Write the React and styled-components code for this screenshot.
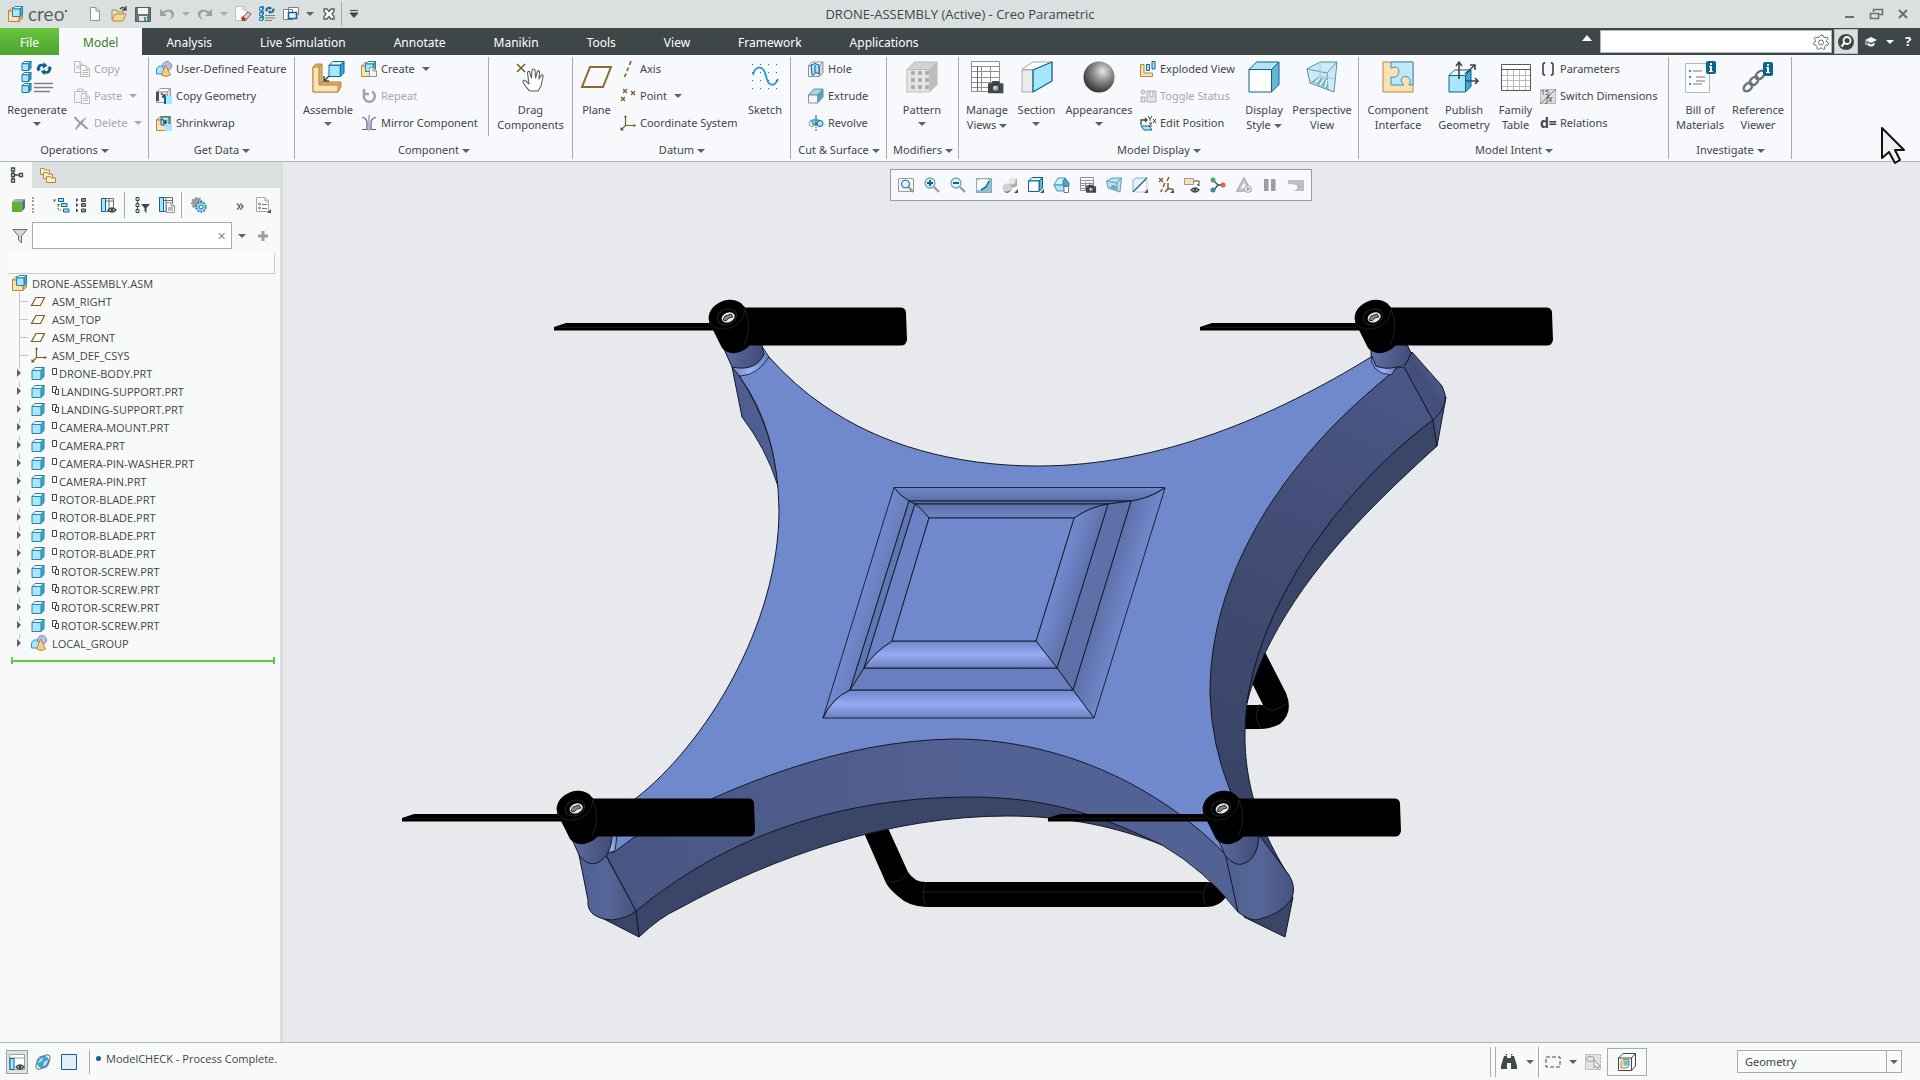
import React, { useState } from 'react';
import styled, { createGlobalStyle } from 'styled-components';

const BLUE = '#0f6390';
const SKY = '#a6e7fd';
const TAN = '#fbe2b0';
const GOLD = '#b38840';
const BROWN = '#7d5f22';
const INK = '#3e4648';
const GREY = '#a9acad';

/* ---------- icons ---------- */

const Cube = ({ x = 0, y = 0, s = 10, front = SKY, top = '#e8f9ff', side = '#3ba6d8', line = BLUE }) => {
  const d = s * 0.25;
  return (
    <g transform={`translate(${x} ${y})`} stroke={line} strokeLinejoin="round">
      <path fill={top} d={`M0 ${d}L${d} 0H${s}L${s - d} ${d}Z`} />
      <path fill={side} d={`M${s - d} ${d}L${s} 0V${s - d}L${s - d} ${s}Z`} />
      <path fill={front} d={`M0 ${d}H${s - d}V${s}H0Z`} />
    </g>
  );
};

const Camera = ({ x, y, s = 1 }) => (
  <g transform={`translate(${x} ${y}) scale(${s})`}>
    <path d="M0 3h3l1-2h6l1 2h3v9H0z" fill="#444a4c" />
    <circle cx="7" cy="7.500" r="3.500" fill="#8b9091" stroke="#1d2122" />
    <circle cx="6.500" cy="7" r="1.200" fill="#eee" />
  </g>
);

const Eye = ({ x, y }) => (
  <g transform={`translate(${x} ${y})`}>
    <path d="M0 3Q4-1 8 3Q4 7 0 3Z" fill="#fff" stroke={INK} strokeWidth="1.300" />
    <circle cx="4" cy="3" r="1.500" fill={INK} />
  </g>
);

const Page = ({ x = 3, y = 1, w = 10, h = 14, line = '#8d9294' }) => (
  <g transform={`translate(${x} ${y})`}>
    <path d={`M.5.5H${w - 4}L${w - 0.5} 4V${h - 0.5}H.5Z`} fill="#fbfcfd" stroke={line} />
    <path d={`M${w - 4} .5V4H${w - 0.5}`} fill="#d5dde0" stroke={line} />
  </g>
);

const Spin = ({ x, y, s = 1 }) => (
  <g transform={`translate(${x} ${y}) scale(${s})`} fill={BLUE}>
    <path d="M1 7C1 3 4 1 8 2L8 0L12 4L7 7L7.500 5C5.500 4.500 4 5 4 7L5.500 7L2.500 10L0 7Z" />
    <path d="M16 7C16 11 13 13 9 12L9 14L5 10L10 7.500L9.500 9.500C11.500 10 13 9 13 7L11.500 7L14.500 4L17 7Z" />
  </g>
);

const Axes = () => (
  <path d="M5.500 1V10.500H15M5.500 10.500L1 15M4.500 2.500L5.500 1L6.500 2.500M13.500 9.500L15 10.500L13.500 11.500M1 12.500V15H3.500" fill="none" stroke={BROWN} strokeWidth="1.200" />
);

const Table = ({ w = 28, h = 28, c = 4, r = 6, line = '#8c9193' }) => (
  <g stroke={line} fill="none">
    <path fill="#fff" d={`M.5.5H${w - 0.5}V${h - 0.5}H.5Z`} />
    {Array.from({ length: r - 1 }, (_, i) => <path key={i} d={`M1 ${Math.round((i + 1) * h / r) + 0.5}H${w - 1}`} />)}
    {Array.from({ length: c - 1 }, (_, i) => <path key={i} d={`M${Math.round((i + 1) * w / c) + 0.5} 5V${h - 1}`} />)}
  </g>
);

const Cross = ({ x, y, s = 4, w = 1.3, c = BROWN }) => (
  <path d={`M${x} ${y}l${s} ${s}m0 ${-s}l${-s} ${s}`} stroke={c} strokeWidth={w} fill="none" />
);

const Corner = () => <path d="M16 12V16H12Z" fill="#4a4f51" />;

const gearPath = 'M8 1L9.800 1L10.300 3L12 3.800L13.900 2.900L15 4.500L13.600 6.200L13.800 8L15.500 9.200L15 11L12.900 11.200L11.700 12.600L12 14.700L10.300 15.500L8.800 14L7 14L5.500 15.500L3.800 14.600L4.200 12.600L3 11.200L1 10.900L.5 9L2.200 8L2.400 6.100L1.200 4.400L2.400 3L4.300 3.800L6 3Z';

const Person = () => (
  <g>
    <path d="M.5 8L3 5H9V13H.5Z" fill={SKY} stroke="#3a94bd" />
    <circle cx="11" cy="5" r="4.500" fill="#b6c0ea" stroke="#7886c4" />
    <path d="M9.500 4L14.500 14Q10 17 5.500 14Z" fill="#f3cf85" stroke={GOLD} />
  </g>
);

const Block = () => (
  <g>
    <Cube x={0.5} y={1.5} s={14} front={TAN} top="#fff3d5" side="#dfb564" line={GOLD} />
    <Cube x={4.5} y={0.5} s={10} line="#2b83aa" />
  </g>
);

const art = {
  logo: <Block />,
  fresh: <Page />,
  open: <g><path d="M1 4V14L4 8H15L12 15H1M1 4H6L7 6H12V8" fill="#f6d796" stroke={GOLD} /><path d="M9 3Q12 0 14 3M15 0V4H11" fill="none" stroke={INK} strokeWidth="1.400" /></g>,
  save: <g><path d="M.5 1.500H15.500V15.500H.5Z" fill="#6e7476" stroke="#54595b" /><path d="M3 2H13V8H3Z" fill="#f4f6f7" /><path d="M4 10H12V15H4Z" fill="#dfe9ec" /><path d="M9 11H11V15H9Z" fill="#3d8fb5" /></g>,
  undo: <path d="M1 3V10H8L5.500 7.500Q9 4 12 7Q14 10 10 14Q16 11 15 7Q12 1 4 5.500Z" fill="#9a9fa1" />,
  redo: <path d="M15 3V10H8L10.500 7.500Q7 4 4 7Q2 10 6 14Q0 11 1 7Q4 1 12 5.500Z" fill="#9a9fa1" />,
  erase: <g><Page x={0} y={0} w={12} h={15} line="#bcc1c3" /><path d="M7 12L13 6L16 8L10 15Z" fill="#e8c9bf" stroke="#8c5145" /><path d="M6 12L8 10L11 13L9 15H7Z" fill="#b03d33" /></g>,
  regen: <g>{[1, 6, 11].map(y => <Cube key={y} x={0.5} y={y - 0.5} s={4} line="#2b83aa" />)}<Spin x={6} y={0} s={0.58} /><path d="M6 9.500H16M6 12H16M6 14.500H13" stroke="#7c8284" /></g>,
  windows: <g fill="#fff" stroke="#7b8183"><path d="M5.500 1.500H15.500V8.500H5.500ZM.5 3.500H9.500V13.500H.5Z" /><path d="M5.500 6.500H13.500V12.500H5.500Z" fill="#e6f6fc" stroke={BLUE} strokeWidth="1.600" /></g>,
  shut: <path d="M3 3H6L8 5.500L10 3H13V5.500L11 8L13 10.500V13H10L8 10.500L6 13H3V10.500L5 8L3 5.500Z" fill="#fff" stroke="#555b5d" strokeWidth="1.300" />,
  customize: <path d="M4 4.500H12M4 7H12L8 11.500Z" fill={INK} stroke={INK} strokeWidth="1" />,
  bigRegen: <g>{[0, 11, 22].map(y => <Cube key={y} x={1} y={y + 0.5} s={9} line="#1d769f" />)}<Spin x={15} y={1} s={0.95} /><path d="M13 22.500H32M13 26.500H32M13 30.500H29" stroke="#7c8284" strokeWidth="1.500" /></g>,
  copy: <g opacity=".6"><Page x={0} y={0} w={10} h={12} /><Page x={6} y={4} w={10} h={12} /><path d="M2 5H6M2 7H6M8 9.500H14M8 11.500H14M8 13.500H14" stroke="#8d9294" /></g>,
  paste: <g opacity=".6"><path d="M.5 3.500H12.500V14.500H.5ZM4 3V1H9V3" fill="#f1f1f1" stroke="#8d9294" /><Page x={7} y={5} w={9} h={11} /><path d="M9 10.500H14M9 12.500H14" stroke="#8d9294" /></g>,
  remove: <path d="M1 1L6 6.500L13 1.500L8.500 8L15 14L12 14L7 9.500L2 15L1 14L5 8L0 3Z" fill="#9a9fa1" />,
  udf: <Person />,
  copyGeom: <g><Cube x={0.5} y={0.5} s={14} front="#f2f2f2" top="#fff" side="#d8dadb" line="#979c9e" /><path d="M0 4H3V13H0Z" fill="#4b5052" /><path d="M5 5L9 9M9 6V9H6" stroke={INK} strokeWidth="1.300" /><path d="M8 8H10V16H8Z" fill={BLUE} /><path d="M10 8H16V16H10Z" fill={SKY} /></g>,
  shrink: <g><Cube x={0.5} y={1.500} s={14} front={TAN} top="#fff3d5" side="#dfb564" line={GOLD} /><path d="M5 2H13V10H5Z" fill={SKY} stroke={BLUE} /><path d="M6 4L10 8M10 5V8H7" stroke={INK} strokeWidth="1.300" /><path d="M9 9H16V16H9Z" fill={SKY} /></g>,
  assemble: <g strokeLinejoin="round"><path d="M1 6L4 3H10V21H29V26L26 31H1Z" fill="#d9b164" stroke={GOLD} /><path d="M1 6H7V24H26V31H1Z" fill={TAN} stroke={GOLD} /><path d="M7 6L10 3M7 24L10 21M26 24L29 21" stroke={GOLD} /><Cube x={17} y={0.500} s={15} /><path d="M17 15L13 19M12 15V20H17" stroke={INK} strokeWidth="1.500" fill="none" /></g>,
  create: <g><Block /><Page x={8} y={6} w={8} h={10} /></g>,
  repeat: <path d="M3.500 5.500A5.500 5.500 0 1 0 11 3.500M3 1V6H8" fill="none" stroke="#a0a4a6" strokeWidth="2.500" />,
  mirror: <g fill="none" stroke="#7a4a9c" strokeWidth="1.200"><path d="M1 2.500H2Q6 4 6 8V14.500H1" /><path d="M15 2.500H14Q10 4 10 8V14.500H15" /><path d="M8 0V16" stroke="#8d9294" /></g>,
  drag: <g><Cross x={2} y={3} s={8} w={1.600} /><path d="M8 21Q8 18 11 20L14 23L12.500 12Q12.500 10 14.500 10.500L16.500 17L17 9Q18.500 7 20 9L20.500 17L22.500 10Q24 9 24.500 11L24 18L26.500 14Q28.500 13.500 28 16L26 25L23 30H15Q11 27 8 21Z" fill="#fff" stroke="#5a5f61" strokeWidth="1.100" strokeLinejoin="round" /></g>,
  plane: <path d="M9 6H30L22 26H1Z" fill="none" stroke="#8c6c2c" strokeWidth="2" />,
  axis: <path d="M11 0L9.500 4M8.500 6.500L7 10M6 12.500L4.500 16" stroke={BROWN} strokeWidth="1.600" />,
  point: <g><Cross x={3} y={1} /><Cross x={11} y={3} /><Cross x={1} y={9} /></g>,
  csys: <Axes />,
  sketch: <g><path d="M4 14C6 5 14 3 17 15C19 25 25 27 29 18" fill="none" stroke="#2fa3d8" strokeWidth="2" /><g fill="#555">{[3, 11, 19, 27].map(x => [3, 11, 19, 27].map(y => <path key={`${x}-${y}`} d={`M${x} ${y}h1v1h-1z`} />))}</g></g>,
  hole: <g><Cube x={0.500} y={1} s={14.500} front="#eef1f2" top="#fff" side="#d5d8d9" line="#8d9294" /><path d="M3 4Q7 1 11 4V13Q7 10 6 14H4Z" fill={SKY} stroke={BLUE} /><path d="M7 4V12" stroke={BLUE} /></g>,
  extrude: <g><path d="M.5 7L6 1H15L10 7Z" fill="#a9d8e9" stroke="#5b93a9" /><path d="M9.500 7L15 1V9L9.500 15Z" fill="#4aa5c8" stroke="#5b93a9" /><path d="M.5 7H9.500V15H.5Z" fill="#f3f4f4" stroke="#8d9294" /></g>,
  revolve: <g><circle cx="4" cy="8.500" r="3" fill="#fff" stroke="#8d9294" /><path d="M3 5.500Q8 3 12 5.500L9 10Q7 9 5 10Z" fill="#6dc5e8" stroke="#4f9abb" /><circle cx="12" cy="8.500" r="3" fill={SKY} stroke={BLUE} /><path d="M8 0V16" stroke={INK} strokeDasharray="4 1 1 1" /></g>,
  pattern: <g><Cube x={1} y={1} s={30} front="#e6e6e6" top="#d3d3d3" side="#bdbdbd" line="#bbb" /><g fill="#a7a7a7" stroke="#d2d2d2" strokeWidth=".5">{[5, 12, 19].map(x => [10, 17, 24].map(y => <path key={`${x}-${y}`} d={`M${x} ${y}h4v4h-4z`} />))}</g></g>,
  manage: <g><Table w={29} h={31} r={6} c={3} /><path d="M6.500 5V30" stroke="#666" /><Camera x={17} y={19} s={1.100} /></g>,
  section: <g strokeLinejoin="round"><path d="M1 8L12 1H31L12 9Z" fill="#fff" stroke="#aaa" /><path d="M1 9H12V31H1Z" fill="#ececec" stroke="#aaa" /><path d="M12 9L31 1V20L12 31Z" fill={SKY} stroke={BLUE} strokeWidth="1.300" /></g>,
  ball: <circle cx="16" cy="16" r="15.500" fill="url(#ballShade)" />,
  exploded: <g><path d="M.5 3.500H4V12H12.500V15.500H.5Z" fill={TAN} stroke={GOLD} /><path d="M6.500 3.500H9.500V9.500H6.500ZM12 .5H15V8H12Z" fill={SKY} stroke={BLUE} /></g>,
  toggle: <g fill="#e4e4e4" stroke="#a9acad"><circle cx="3" cy="4" r="2" /><path d="M1 9H5V14H1ZM7 3H16V14H7ZM10 3V9H13V3" /></g>,
  position: <g><path d="M1 10V5H7M5 3L7 5L5 7M1 5V9" fill="none" stroke={INK} strokeWidth="1.300" /><path d="M8 1L10 4L12 1M10 4V6M13 4L16 8M16 4L13 8M9 8H12L9 11H12" fill="none" stroke={INK} /><path d="M1 11H9L12 15H4Z" fill={SKY} stroke={BLUE} /></g>,
  display: <Cube x={1} y={1} s={30} front="#fff" top="#b3e3f5" side="#68b4d3" />,
  perspective: <g strokeLinejoin="round"><path d="M1 8L14 1H31L28 31L4 22Z" fill="#cfe9f4" stroke="#4e93ae" /><path d="M1 8L21 12L31 1M21 12L22 29" fill="none" stroke="#5d9fba" /><path d="M14 1V15L5 22M14 15L28 18" fill="none" stroke="#9cc9db" /><path d="M5 21L12 16L21 18L22 28Z" fill="#7cb5cc" /><path d="M9 22L14 17M14 24L18 18M19 26L21 19" stroke="#fff" strokeWidth="1.500" /></g>,
  puzzle: <g><path d="M1 1H31V31H1Z" fill={TAN} stroke={GOLD} /><path d="M9 1H31V24H27Q30 19 26 16Q20 14 19 19Q20 23 22 24H9V16Q16 18 17 10Q16 4 9 7Z" fill="#bfe9f7" stroke="#3a94bd" /></g>,
  publish: <g><Cube x={1} y={9} s={22} /><g stroke={INK} strokeWidth="1.600" fill="none"><path d="M11 18V1M8 5L11 1L14 5M17 13L27 4M22 4H27V9M17 20H30M27 17L30 20L27 23" /></g></g>,
  family: <g transform="translate(1 3)"><Table w={30} h={27} r={5} c={5} line="#bbb" /><path d="M.5.5H29.500V26.500H.5ZM1 5.500H29" fill="none" stroke="#55595b" /></g>,
  params: <path d="M5 1.500L3 3V13L5 14.500M11 1.500L13 3V13L11 14.500" fill="none" stroke={INK} strokeWidth="1.600" />,
  switchDim: <g><path d="M.5 1.500H15.500V15.500H.5Z" fill="#dcdedf" stroke="#b4b7b8" /><path d="M0 16L16 1" stroke="#777" /><text x="1" y="7" fontSize="7" fontFamily="Noto Sans" fill={INK}>15</text><text x="6" y="14" fontSize="8" fontStyle="italic" fontFamily="Noto Sans" fill={INK}>fx</text></g>,
  relations: <text x="0" y="13" fontSize="14" fontWeight="700" fontFamily="Noto Sans" fill={INK}>d=</text>,
  bom: <g><Page x={1} y={2} w={25} h={30} line="#b4b8ba" /><path d="M5 9h2v2H5zM5 15h2v2H5zM5 22h2v2H5z" fill="#239bd0" /><path d="M9 10H18M12 16H21M12 20H21M9 23H18" stroke="#777" /><rect x="22" y="0" width="10" height="13" rx="2" fill={BLUE} /><path d="M26 2h2v2h-2zM25 5h3v5h1v1h-4v-1h1V6h-1z" fill="#fff" /></g>,
  refs: <g><g fill="none" stroke="#6c7173" strokeWidth="2.400"><ellipse cx="6" cy="26" rx="5" ry="3.300" transform="rotate(-45 6 26)" /><ellipse cx="12" cy="20" rx="5" ry="3.300" transform="rotate(-45 12 20)" /><ellipse cx="18" cy="14" rx="5" ry="3.300" transform="rotate(-45 18 14)" /></g><rect x="21" y="1" width="10" height="14" rx="2" fill={BLUE} /><path d="M25 3h2v2h-2zM24 6h3v5h1v1h-4v-1h1V7h-1z" fill="#fff" /></g>,
  gear: <g fill="none" stroke="#666b6d"><path d={gearPath} /><circle cx="8" cy="8.500" r="2.500" /></g>,
  find: <g><circle cx="8" cy="8" r="8" fill={INK} /><circle cx="9" cy="6.500" r="3.500" fill="none" stroke="#fff" strokeWidth="1.800" /><path d="M6.500 9L3.500 12.500" stroke="#fff" strokeWidth="2" /></g>,
  cap: <g fill="#f3f5f5"><path d="M2 6L8 3L14 6L8 9ZM4.500 8.500L8 10.500L11.500 8.500V11Q8 14 4.500 11ZM2.500 7V11H3.500V7Z" /></g>,
  min: <path d="M4 11H13" stroke="#6a7072" strokeWidth="2" />,
  restore: <path d="M5.500 6V3.500H14.500V8.500H11M2.500 7.500H10.500V12.500H2.500Z" fill="none" stroke="#6a7072" strokeWidth="1.600" />,
  quit: <path d="M4 4L12 12M12 4L4 12" stroke="#6a7072" strokeWidth="2" />,
  fit: <g><path d="M.5 1.500H15.500V14.500H.5Z" fill="#f4f5f5" stroke="#999ea0" /><circle cx="7.500" cy="7" r="4" fill="#dff3fa" stroke={BLUE} /><path d="M10.500 10L15 15" stroke="#8d9294" strokeWidth="2" /></g>,
  zoomIn: <g><circle cx="6" cy="6" r="5" fill="#dff3fa" stroke="#6fa6bd" strokeWidth="1.300" /><path d="M3 6H9M6 3V9" stroke={BLUE} strokeWidth="2" /><path d="M10 10L15 15" stroke="#999ea0" strokeWidth="2.400" /></g>,
  zoomOut: <g><circle cx="6" cy="6" r="5" fill="#dff3fa" stroke="#6fa6bd" strokeWidth="1.300" /><path d="M3 6H9" stroke={BLUE} strokeWidth="2" /><path d="M10 10L15 15" stroke="#999ea0" strokeWidth="2.400" /></g>,
  repaint: <g><path d="M.5 1.500H15.500V15.500H.5Z" fill="#8cc0d6" stroke="#99a5aa" /><path d="M1 3Q8 1 13 3Q14 8 7 13H1Z" fill="#f5fbfd" /><path d="M5 13L10 10L13 4" fill="none" stroke={BLUE} strokeWidth="1.500" /></g>,
  render: <g><path d="M8 2H15V9L10 11L7 7Z" fill="#a8a8a8" /><circle cx="10" cy="4" r="3.500" fill="#e5e5e5" /><circle cx="5" cy="11" r="4.500" fill="#d2d2d2" /><path d="M2 14Q8 16 10 10Q9 16 4 16Z" fill="#777" /><Corner /></g>,
  styleBox: <g><Cube x={0.500} y={0.500} s={14} front="#fff" top="#d4eff9" side="#68b4d3" /><Corner /></g>,
  orient: <g><path d="M0 8L4 1H11V8Z" fill="#d4eff9" stroke="#4e93ae" /><path d="M0 8H10V14H3Z" fill={SKY} stroke="#4e93ae" /><path d="M11 1L15 6V9H9V4Z" fill="#4aa5c8" stroke="#3a86ad" /><path d="M10 9.500H14.500V15.500H10Z" fill="#fff" stroke="#777" /></g>,
  viewMgr: <g><Table w={14} h={14} r={5} c={3} /><Camera x={6} y={7} s={0.720} /></g>,
  persp16: <g><path d="M.5 4L6 1H15.500L14 15L2 11Z" fill="#bfe0ee" stroke="#5d9fba" /><path d="M.5 4L11 6L15 1M11 6V14" fill="none" stroke="#5d9fba" /><path d="M4 11L6 8L11 9V13Z" fill="#6aa9c4" /></g>,
  clip: <g><path d="M1 3L4 1H15L1 15Z" fill="#e3f5fb" stroke="#7fb4c9" /><path d="M15 4V12L12 15H4" fill="none" stroke="#999" strokeDasharray="1 1" /><path d="M1 15L15 1" stroke={BLUE} strokeWidth="1.300" /><Corner /></g>,
  datums: <g><Cross x={1} y={1} s={4} /><path d="M11 0L9 4M7 6L5 10M4 12L3 15M10 6V12H15M10 12L7 15" fill="none" stroke={BROWN} strokeWidth="1.500" /><Corner /></g>,
  annot: <g><path d="M.5 1.500H9.500V7.500H.5Z" fill={TAN} stroke="#999" /><path d="M10 4H15V9M13 7L15 9" fill="none" stroke={INK} /><Eye x={7} y={10} /></g>,
  spin: <g><path d="M3 3L8 8L3 14M8 8H13" fill="none" stroke={INK} strokeWidth="1.300" /><circle cx="3" cy="3" r="2.500" fill="#58a35b" /><circle cx="3" cy="13" r="2.500" fill="#3a86ad" /><circle cx="13" cy="8" r="2.500" fill="#e0605b" /></g>,
  sim: <g><path d="M8 1L15 14H1Z" fill="#cacccd" stroke="#a9acad" strokeWidth="1.500" /><path d="M8 6L11 11H5Z" fill="#fff" /><circle cx="12" cy="12" r="3.500" fill="#e8e8e8" stroke="#a9acad" /><path d="M11 10L14 12L11 14Z" fill="#999" /></g>,
  pause: <path d="M2 2H6.500V14H2ZM9 2H13.500V14H9Z" fill="#9c9fa1" />,
  result: <path d="M0 3H16V14H5Q10 13 9 9Q8 7 0 7Z" fill="#bcbebf" />,
  tree: <g fill="#fff" stroke={INK} strokeWidth="1.300"><path d="M5 4V13M5 8H13" /><path d="M3.500 1H6.500V4H3.500ZM3.500 6.500H6.500V9.500H3.500ZM3.500 12H6.500V15H3.500ZM11.500 6.500H14.500V9.500H11.500Z" /></g>,
  folders: <g fill="#fff0cb" stroke={GOLD}><path d="M.5 1.500H4L5 3H9.500V7.500H.5Z" /><path d="M3.500 5.500H7L8 7H12.500V11.500H3.500Z" /><path d="M6.500 9.500H10L11 11H15.500V15.500H6.500Z" /></g>,
  green: <g><path d="M2 5L5 2H15L11.500 5Z" fill="#a8acad" /><path d="M11.500 5L15 2V11L11.500 15Z" fill="#666b6d" /><path d="M2 5H11.500V15H2Z" fill="#5bb232" /></g>,
  branches: <g fill={SKY} stroke={BLUE}><path d="M5.500 1.500H10.500V4.500H5.500ZM8.500 6.500H14V9.500H8.500ZM10.500 12H16V15H10.500Z" /><path d="M0 2.500L3 2.500L1.500 5ZM4 7L7 7L5.500 9ZM5 13H9" fill={INK} stroke="none" /><path d="M5 9V13H9" stroke={INK} fill="none" strokeDasharray="1 1" /></g>,
  collapse: <g fill="#8f9496" stroke={INK}><path d="M5.500 1.500H9.500V4.500H5.500ZM5.500 6.500H9.500V9.500H5.500ZM5.500 12H9.500V15H5.500Z" /><path d="M0 1L2.500 3L0 5ZM0 6L2.500 8L0 10ZM0 11.500L2.500 13.500L0 15.500Z" fill={INK} stroke="none" /></g>,
  columns: <g><path d="M1.500 1.500H13.500V14.500H1.500ZM9 1V14M1 4H14" fill="#fff" stroke="#6a7072" /><path d="M1.500 1.500H5.500V14.500H1.500Z" fill={SKY} stroke={BLUE} /><Eye x={8} y={10} /></g>,
  treeFilter: <g><path d="M3.500 2V14" stroke={INK} /><path d="M2 .5H5V3.500H2ZM2 6.500H5V9.500H2ZM2 12.500H5V15.500H2Z" fill={SKY} stroke={INK} /><path d="M7 7H16L12.500 11V16L10.500 14V11Z" fill={INK} /></g>,
  colDoc: <g><path d="M.5.5H13.500V14.500H.5ZM7 1V14M.5 3.500H14" fill="#fff" stroke="#6a7072" /><path d="M.5.5H4.500V14.500H.5Z" fill={SKY} stroke={BLUE} /><Page x={7} y={5} w={9} h={11} /><path d="M9 11H14M9 13H14" stroke="#777" /></g>,
  gears: <g><circle cx="6" cy="6" r="5" fill="#999ea0" stroke="#8d9294" strokeWidth="2" strokeDasharray="2 1.500" /><circle cx="10" cy="10" r="4.800" fill={SKY} stroke="#2e89b0" strokeWidth="2" strokeDasharray="2 1" /><circle cx="10" cy="10" r="2" fill="#fff" stroke={BLUE} /></g>,
  props: <g><Page x={1} y={0} w={13} h={15} line="#a4a8aa" /><circle cx="4.500" cy="7" r="1" fill="none" stroke="#777" /><circle cx="4.500" cy="11" r="1" fill="none" stroke="#777" /><path d="M7 7.500H12M7 11.500H12" stroke="#777" /><Corner /></g>,
  funnel: <path d="M1 1.500H15L9.500 8V15L6.500 12V8Z" fill="#d3d7d8" stroke="#6a7072" />,
  plus: <path d="M8 3V13M3 8H13" stroke="#9a9fa1" strokeWidth="3" />,
  asm: <Block />,
  datum: <path d="M5 4.500H13.500L9.500 12.500H.5Z" fill="none" stroke={BROWN} strokeWidth="1.200" />,
  part: <Cube x={1} y={2.500} s={12} line="#2b83aa" />,
  group: <Person />,
  panel: <g><path d="M.5.5H15.500V15.500H.5ZM.5 4H15.500" fill="#fff" stroke="#999ea0" /><path d="M1 4.500H5V15.500H1Z" fill={SKY} stroke={BLUE} /><Eye x={7} y={10} /></g>,
  globe: <g><circle cx="8" cy="8" r="6.500" fill="#3ea7d7" /><path d="M4 4L8 3L7 7L3 9ZM9 8L13 6L12 11L8 13Z" fill="#bce8f8" /><ellipse cx="8" cy="8" rx="9" ry="4.500" fill="none" stroke="#6a7072" transform="rotate(-45 8 8)" /></g>,
  square: <path d="M.5.5H15.500V15.500H.5Z" fill="#e4edf5" stroke={BLUE} />,
  binoc: <path d="M3 2H6V4H10V2H13L16 12V15H10V9H6V15H0V12ZM6 2V0H4M10 2V0H12" fill="#43484a" />,
  marquee: <path d="M1 3H15V13H1Z" fill="none" stroke={INK} strokeDasharray="4 2" />,
  preselect: <g><path d="M.5.5H15.500V15.500H.5Z" fill="#e2e4e4" stroke="#aaa" strokeDasharray="2 1" /><ellipse cx="5.500" cy="5" rx="4" ry="2.500" fill="none" stroke="#999" /><path d="M9 6V14L11 12L13 15L14 12H15Z" fill="#eee" stroke="#999" /></g>,
  model: <g><path d="M.5 5L5 .5H17.500V13L13.500 17.500H.5ZM.5 5H13.500V17.500M13.500 5L17.500 .5" fill="none" stroke={INK} /><path d="M3 9L5 6.500H11V13L9 15H3Z" fill={TAN} stroke={GOLD} /><path d="M5.500 7.500H11.500V12.500H5.500Z" fill="#5cc0e8" /></g>,
};

const IconSvg = styled.svg`
  display: block;
  flex: none;
  overflow: visible;
`;

const Icon = ({ name, size = 16 }) => (
  <IconSvg width={size} height={size} viewBox={`0 0 ${size} ${size}`} aria-hidden="true">{art[name]}</IconSvg>
);

/* ---------- data ---------- */

const quickAccess = ['fresh', 'open', 'save', 'undo', '>', 'redo', '>', 'erase', 'regen', 'windows', '>', 'shut'];
const tabs = ['Model', 'Analysis', 'Live Simulation', 'Annotate', 'Manikin', 'Tools', 'View', 'Framework', 'Applications'];

const ribbon = [
  { label: 'Operations', width: 149, items: [
    { big: ['Regenerate'], icon: 'bigRegen', width: 74, menu: true },
    { rows: [['copy', 'Copy', 'off'], ['paste', 'Paste', 'off menu'], ['remove', 'Delete', 'off menu']] },
  ] },
  { label: 'Get Data', width: 146, pad: 7, items: [
    { rows: [['udf', 'User-Defined Feature'], ['copyGeom', 'Copy Geometry'], ['shrink', 'Shrinkwrap']] },
  ] },
  { label: 'Component', width: 278, items: [
    { big: ['Assemble'], icon: 'assemble', width: 66, menu: true },
    { rows: [['create', 'Create', 'menu'], ['repeat', 'Repeat', 'off'], ['mirror', 'Mirror Component']], width: 127 },
    { divider: true },
    { big: ['Drag', 'Components'], icon: 'drag', width: 83 },
  ] },
  { label: 'Datum', width: 218, items: [
    { big: ['Plane'], icon: 'plane', width: 47 },
    { rows: [['axis', 'Axis'], ['point', 'Point', 'menu'], ['csys', 'Coordinate System']], width: 120 },
    { big: ['Sketch'], icon: 'sketch', width: 50 },
  ] },
  { label: 'Cut & Surface', width: 96, pad: 17, items: [
    { rows: [['hole', 'Hole'], ['extrude', 'Extrude'], ['revolve', 'Revolve']] },
  ] },
  { label: 'Modifiers', width: 72, items: [{ big: ['Pattern'], icon: 'pattern', width: 70, menu: true }] },
  { label: 'Model Display', width: 400, items: [
    { big: ['Manage', 'Views'], icon: 'manage', width: 56, inlineMenu: true },
    { big: ['Section'], icon: 'section', width: 43, menu: true },
    { big: ['Appearances'], icon: 'ball', width: 82, menu: true },
    { rows: [['exploded', 'Exploded View'], ['toggle', 'Toggle Status', 'off'], ['position', 'Edit Position']], width: 96 },
    { big: ['Display', 'Style'], icon: 'display', width: 56, inlineMenu: true },
    { big: ['Perspective', 'View'], icon: 'perspective', width: 60 },
  ] },
  { label: 'Model Intent', width: 310, items: [
    { big: ['Component', 'Interface'], icon: 'puzzle', width: 78 },
    { big: ['Publish', 'Geometry'], icon: 'publish', width: 54 },
    { big: ['Family', 'Table'], icon: 'family', width: 49 },
    { rows: [['params', 'Parameters'], ['switchDim', 'Switch Dimensions'], ['relations', 'Relations']] },
  ] },
  { label: 'Investigate', width: 123, items: [
    { big: ['Bill of', 'Materials'], icon: 'bom', width: 62 },
    { big: ['Reference', 'Viewer'], icon: 'refs', width: 54 },
  ] },
];

const viewTools = ['fit', 'zoomIn', 'zoomOut', 'repaint', 'render', 'styleBox', 'orient', 'viewMgr', 'persp16', 'clip', 'datums', 'annot', 'spin', 'sim', 'pause', 'result'];

const modelTree = [
  ['datum', 'ASM_RIGHT'],
  ['datum', 'ASM_TOP'],
  ['datum', 'ASM_FRONT'],
  ['csys', 'ASM_DEF_CSYS'],
  ['part', 'DRONE-BODY.PRT', 'one'],
  ['part', 'LANDING-SUPPORT.PRT', 'two'],
  ['part', 'LANDING-SUPPORT.PRT', 'two'],
  ['part', 'CAMERA-MOUNT.PRT', 'one'],
  ['part', 'CAMERA.PRT', 'one'],
  ['part', 'CAMERA-PIN-WASHER.PRT', 'one'],
  ['part', 'CAMERA-PIN.PRT', 'one'],
  ['part', 'ROTOR-BLADE.PRT', 'one'],
  ['part', 'ROTOR-BLADE.PRT', 'one'],
  ['part', 'ROTOR-BLADE.PRT', 'one'],
  ['part', 'ROTOR-BLADE.PRT', 'one'],
  ['part', 'ROTOR-SCREW.PRT', 'two'],
  ['part', 'ROTOR-SCREW.PRT', 'two'],
  ['part', 'ROTOR-SCREW.PRT', 'two'],
  ['part', 'ROTOR-SCREW.PRT', 'two'],
  ['group', 'LOCAL_GROUP'],
];

/* ---------- parts ---------- */

function BigItem({ item }) {
  return (
    <BigButton $width={item.width}>
      <Icon name={item.icon} size={32} />
      <BigLabel>
        <span>{item.big[0]}</span>
        {item.big[1] && <span>{item.big[1]}{item.inlineMenu && <Caret $gap={3} />}</span>}
        {item.menu && <CaretLine><Caret /></CaretLine>}
      </BigLabel>
    </BigButton>
  );
}

function RibbonItem({ item }) {
  if (item.divider) return <Divider />;
  if (item.big) return <BigItem item={item} />;
  return (
    <Rows $width={item.width}>
      {item.rows.map(([icon, label, flags = '']) => (
        <SmallButton key={label} disabled={flags.includes('off')}>
          <Icon name={icon} />
          <span>{label}</span>
          {flags.includes('menu') && <Caret $gap={3} $off={flags.includes('off')} />}
        </SmallButton>
      ))}
    </Rows>
  );
}

function TitleBar() {
  return (
    <Title>
      <QuickAccess>
        <Icon name="logo" />
        <Brand>creo<BrandDot /></Brand>
        {quickAccess.map((name, i) => (
          <PlainButton key={i} aria-label={name === '>' ? 'More' : name} $width={name === '>' ? 14 : 24}>
            {name === '>' ? <Caret $off={i < 8} /> : <Icon name={name} />}
          </PlainButton>
        ))}
        <BarLine $height={24} />
        <PlainButton aria-label="Customize" $width={24}><Icon name="customize" /></PlainButton>
      </QuickAccess>
      <TitleText>DRONE-ASSEMBLY (Active) - Creo Parametric</TitleText>
      <WindowButtons>
        {['min', 'restore', 'quit'].map(n => <PlainButton key={n} aria-label={n} $width={27}><Icon name={n} /></PlainButton>)}
      </WindowButtons>
    </Title>
  );
}

function TabBar({ active, onChange }) {
  return (
    <Tabs>
      <FileTab>File</FileTab>
      {tabs.map(t => <Tab key={t} $active={t === active} onClick={() => onChange(t)}>{t}</Tab>)}
      <TabTools>
        <CollapseButton aria-label="Minimize ribbon"><UpMark /></CollapseButton>
        <SearchBox>
          <SearchInput aria-label="Search commands" />
          <Icon name="gear" />
        </SearchBox>
        <FindButton aria-label="Find"><Icon name="find" /></FindButton>
        <PlainButton aria-label="Learning" $width={26}><Icon name="cap" /></PlainButton>
        <PlainButton aria-label="Learning menu" $width={12}><Caret $light /></PlainButton>
        <HelpButton>?</HelpButton>
      </TabTools>
    </Tabs>
  );
}

const Marker = ({ kind }) => (
  <IconSvg width={kind === 'one' ? 6 : 8} height="10" viewBox={kind === 'one' ? '0 0 6 10' : '0 0 8 10'} aria-hidden="true">
    <g fill="#fff" stroke={INK}>
      <path d="M.5.5H4.500V6.500H.5Z" />
      {kind === 'two' && <path d="M3.500 3.500H6.500V8.500H3.500Z" />}
    </g>
  </IconSvg>
);

function ModelTree() {
  return (
    <Side>
      <SideTabs>
        <SideTab $active aria-label="Model tree"><Icon name="tree" /></SideTab>
        <SideTab aria-label="Folder browser"><Icon name="folders" /></SideTab>
      </SideTabs>
      <TreeTools>
        <PlainButton $width={28} aria-label="Active model"><Icon name="green" /></PlainButton>
        <Grip />
        <PlainButton $width={24} aria-label="Expand"><Icon name="branches" /></PlainButton>
        <PlainButton $width={22} aria-label="Collapse"><Icon name="collapse" /></PlainButton>
        <PlainButton $width={26} aria-label="Columns"><Icon name="columns" /></PlainButton>
        <BarLine $height={26} $space={3} />
        <PlainButton $width={28} aria-label="Tree filter"><Icon name="treeFilter" /></PlainButton>
        <PlainButton $width={22} aria-label="Column setup"><Icon name="colDoc" /></PlainButton>
        <BarLine $height={26} $space={3} />
        <PlainButton $width={28} aria-label="Settings"><Icon name="gears" /></PlainButton>
        <More>»</More>
        <PlainButton $width={34} aria-label="Properties"><Icon name="props" /></PlainButton>
      </TreeTools>
      <FilterRow>
        <Icon name="funnel" />
        <FilterBox>
          <FilterInput aria-label="Filter tree" />
          <ClearButton aria-label="Clear filter">✕</ClearButton>
        </FilterBox>
        <PlainButton $width={20} aria-label="Filter options"><Caret /></PlainButton>
        <PlainButton $width={22} aria-label="Add filter"><Icon name="plus" /></PlainButton>
      </FilterRow>
      <TreeHead />
      <TreeRoot><Icon name="asm" />DRONE-ASSEMBLY.ASM</TreeRoot>
      <TreeList>
        {modelTree.map(([icon, label, mark], i) => (
          <TreeItem key={i}>
            <Branch $leaf={i < 4}>{i >= 4 && <Twisty />}</Branch>
            <Icon name={icon} />
            <TreeName>{mark && <Marker kind={mark} />}{label}</TreeName>
          </TreeItem>
        ))}
      </TreeList>
      <InsertLine />
    </Side>
  );
}

// the folds and the outer edges of the arms are shared by neighbouring faces
const armFold = 'C1340 490 1262 600 1247 703';
const armUnder = 'Q1252 682 1264 655C1300 580 1355 520 1437 446';
const armLow = 'C1242 745 1243 805 1289 876';
const frontFold = 'C740 825 860 797 971 797C1055 797 1110 820 1162 845';
const frontUnder = 'Q660 917 678 909C775 856 890 816 1007 816C1070 816 1120 828 1162 845';

const Rotor = ({ x = 0, y = 0 }) => (
  <g transform={`translate(${x} ${y})`}>
    <path d="M554 327L566 323H715V330.500H554Z" fill="#000" />
    <path d="M558 327.500H712" stroke="#24272c" strokeWidth=".6" />
    <path d="M744 307.500H901Q906 308 906 313L907 340Q906 345.500 901 345.500H744Z" fill="#000" />
    <path d="M709 322L722 348Q727 354 736 353Q745 351 750 345L750 324Q749 314 744 306Z" fill="#000" />
    <ellipse cx="727" cy="315" rx="19" ry="14.500" transform="rotate(-22 727 315)" fill="#000" />
    <path d="M709 323Q718 333 733 327Q744 321 745 309M745 309Q753 328 744 345" fill="none" stroke="#23262c" strokeWidth=".8" />
    <ellipse cx="727" cy="317" rx="10" ry="7.500" transform="rotate(-22 727 317)" fill="none" stroke="#23262c" />
    <ellipse cx="728" cy="317.500" rx="6.800" ry="4.800" transform="rotate(-22 728 317)" fill="#e9e9e4" />
    <path d="M723 320L725 316L731 314L733 317L729 318L726 321Z" fill="#85857f" stroke="#111" strokeWidth=".8" />
  </g>
);

const Drone = () => (
  <Scene viewBox="283 162 1637 880" role="img" aria-label="Drone assembly model">
    <defs>
      <linearGradient id="side" gradientUnits="userSpaceOnUse" x1="1420" y1="370" x2="1220" y2="800">
        <stop offset="0" stopColor="#4b5887" /><stop offset=".5" stopColor="#404c73" /><stop offset="1" stopColor="#394366" />
      </linearGradient>
      <linearGradient id="front" gradientUnits="userSpaceOnUse" x1="610" y1="0" x2="1240" y2="0">
        <stop offset="0" stopColor="#495683" /><stop offset=".6" stopColor="#536294" /><stop offset="1" stopColor="#536294" />
      </linearGradient>
      <linearGradient id="cone"><stop offset="0" stopColor="#4f5f90" /><stop offset=".5" stopColor="#566699" /><stop offset="1" stopColor="#46537e" /></linearGradient>
      <linearGradient id="coneR" gradientUnits="userSpaceOnUse" x1="1412" y1="400" x2="1446" y2="378">
        <stop offset="0" stopColor="#495684" /><stop offset=".5" stopColor="#424e77" /><stop offset="1" stopColor="#52629a" />
      </linearGradient>
      <linearGradient id="post"><stop offset="0" stopColor="#5d6fa8" /><stop offset="1" stopColor="#414c74" /></linearGradient>
      <linearGradient id="fillet"><stop offset="0" stopColor="#7088cc" /><stop offset=".5" stopColor="#9db2f5" /><stop offset="1" stopColor="#637abb" /></linearGradient>
      <linearGradient id="bandTop" x2="0" y2="1"><stop offset="0" stopColor="#7088cc" /><stop offset="1" stopColor="#5b6da4" /></linearGradient>
      <linearGradient id="bandTopIn" x2="0" y2="1"><stop offset="0" stopColor="#5b6da4" /><stop offset="1" stopColor="#7088cc" /></linearGradient>
      <linearGradient id="bandLow" x2="0" y2="1"><stop offset="0" stopColor="#6e86ca" /><stop offset=".5" stopColor="#96abf2" /><stop offset="1" stopColor="#6b81c2" /></linearGradient>
      <linearGradient id="bandRight" gradientUnits="userSpaceOnUse" x1="1131" y1="501" x2="1158" y2="509"><stop offset="0" stopColor="#5e71aa" /><stop offset="1" stopColor="#7088cc" /></linearGradient>
      <linearGradient id="bandRightIn" gradientUnits="userSpaceOnUse" x1="1078" y1="518" x2="1104" y2="526"><stop offset="0" stopColor="#7088cc" /><stop offset="1" stopColor="#5c6ea6" /></linearGradient>
      <linearGradient id="bandLeft" gradientUnits="userSpaceOnUse" x1="890" y1="500" x2="907" y2="505"><stop offset="0" stopColor="#7088cc" /><stop offset="1" stopColor="#677dbc" /></linearGradient>
      <radialGradient id="ballShade" cx=".62" cy=".32" r=".7"><stop offset="0" stopColor="#e6e6e6" /><stop offset=".45" stopColor="#8c8c8c" /><stop offset="1" stopColor="#333" /></radialGradient>
    </defs>

    {/* landing skids */}
    <path d="M864 833L888 828L908 872Q914 882 926 882H1208Q1230 885 1228 893Q1222 907 1205 907H926Q908 906 899 897Q890 890 886 883Z" />
    <path d="M886 882Q902 884 908 872M926 882Q920 895 927 907M1208 882Q1200 895 1206 907M922 892H1203" fill="none" stroke="#26292f" strokeWidth=".8" />
    <path d="M1264 650L1286 693Q1294 712 1280 724Q1270 729 1261 729H1243V705H1263L1250 679Z" />
    <path d="M1263 705Q1270 716 1286 704M1260 704Q1252 716 1261 729" fill="none" stroke="#26292f" strokeWidth=".8" />

    <g stroke="#141827" strokeLinejoin="round">
      {/* right arm */}
      <path fill="url(#side)" d={`M1396 368L1404 367L1433 420${armFold}${armLow}L1259 870L1225 840L1200 760L1190 690L1220 520L1330 400Z`} />
      <path fill="#3b4568" d={`M1433 420${armFold}${armUnder}Z`} />
      <path fill="#45517e" d="M1433 420Q1444 409 1446 397L1437 446Z" />
      <path fill="url(#coneR)" d="M1404 367L1412 352L1442 386Q1452 404 1433 420Z" />
      <path fill="#4f5e90" d="M732 367L742 417Q766 448 778 486Q774 430 740 377Z" />

      {/* underside and front */}
      <path fill="#3b4568" d={`M636 911L639 937${frontUnder}L1100 795L1000 780L870 790L705 850Z`} />
      <path fill="url(#front)" d={`M606 855L636 911${frontFold}Q1205 870 1238 912L1226 850L1100 700L950 690L760 720L650 800L612 852Z`} />

      {/* top face */}
      <path fill="#7088cc" d="M769 357Q795 386 823 405C880 445 955 466 1038 466C1160 466 1275 416 1371 357L1396 369L1368 393C1280 470 1210 575 1210 693Q1211 744 1231 793L1236 840L1224 853C1150 778 1050 739 953 739C840 741 730 785 633 838L613 853L607 824L612 820L635 799C705 745 779 625 779 510Q778 430 740 377L745 365Z" />

      {/* pocket */}
      <g strokeWidth=".9">
        <path fill="url(#bandTop)" d="M894 487.500H1165Q1148 499 1131 501H909Q900 496 894 487.500Z" />
        <path fill="url(#bandRight)" d="M1165 488L1094 718L1073 690L1131 501Q1148 499 1165 488Z" />
        <path fill="url(#bandLow)" d="M823 718Q832 698 850 690H1073L1094 718Z" />
        <path fill="url(#bandLeft)" d="M894 487.500L823 718Q832 698 850 690L909 501Q900 496 894 487.500Z" />
        <path fill="#5668a0" d="M909 501H1131L1108 504H915Z" />
        <path fill="#5d70a8" d="M1131 501L1073 690L1057 668L1108 504Z" />
        <path fill="#687ebf" d="M850 690L864 668H1057L1073 690Z" />
        <path fill="#6076b2" d="M909 501L850 690L864 668L915 504Z" />
        <path fill="url(#bandTopIn)" d="M915 504H1108Q1090 507 1074 518H929Q921 508 915 504Z" />
        <path fill="url(#bandRightIn)" d="M1108 504L1057 668L1036 641L1074 518Q1090 507 1108 504Z" />
        <path fill="url(#bandLow)" d="M864 668Q872 654 892 641H1036L1057 668Z" />
        <path fill="#6b82c4" d="M915 504L864 668Q872 654 892 641L929 518Q921 508 915 504Z" />
        <path fill="#7088cc" d="M929 518H1074L1036 641H892Z" />
      </g>

      {/* lower corners */}
      <path fill="#3b4568" d="M600 917L639 937L636 911Z" />
      <path fill="url(#cone)" d="M579 855L588 900Q586 918 612 920Q628 918 636 911L606 856Z" />
      <path fill="#3b4568" d="M1244 917L1285 937L1293 897Z" />
      <path fill="url(#cone)" d="M1225 853L1238 912Q1248 920 1256 920Q1280 915 1291 900Q1297 888 1289 875L1259 835Z" />

      {/* rotor posts */}
      <path fill="url(#fillet)" strokeWidth=".8" d="M732 367L740 376Q758 375 769 357L758 340Z" />
      <path fill="url(#post)" d="M720 340L732 367Q756 372 764 354L760 338Z" />
      <path fill="url(#fillet)" strokeWidth=".8" d="M1371 355Q1370 373 1391 375L1396 368L1396 355Z" />
      <path fill="url(#post)" d="M1371 340V354L1376 366Q1386 370 1396 367Q1406 369 1411 353L1404 338Z" />
      <path fill="url(#fillet)" strokeWidth=".8" d="M611 832L617 836L615 851L606 853Z" />
      <path fill="url(#post)" d="M568 830L579 855Q592 872 606 856Q613 845 612 832Z" />
      <path fill="url(#post)" d="M1214 830L1225 855Q1238 872 1252 858Q1259 850 1259 832Z" />
    </g>

    <Rotor />
    <Rotor x={646} />
    <Rotor x={-152} y={491} />
    <Rotor x={494} y={491} />
  </Scene>
);

function StatusBar() {
  return (
    <Status>
      <StatusToggle aria-label="Navigator"><Icon name="panel" /></StatusToggle>
      <PlainButton $width={26} aria-label="Browser"><Icon name="globe" /></PlainButton>
      <PlainButton $width={26} aria-label="Full screen"><Icon name="square" /></PlainButton>
      <StatusLine />
      <StatusText><Dot />ModelCHECK - Process Complete.</StatusText>
      <StatusTools>
        <BarLine $height={30} />
        <Spacer />
        <BarLine $height={30} />
        <PlainButton $width={26} aria-label="Search"><Icon name="binoc" /></PlainButton>
        <PlainButton $width={16} aria-label="Search menu"><Caret /></PlainButton>
        <BarLine $height={30} />
        <PlainButton $width={28} aria-label="Selection box"><Icon name="marquee" /></PlainButton>
        <PlainButton $width={12} aria-label="Selection menu"><Caret /></PlainButton>
        <PlainButton $width={28} aria-label="Preselect"><Icon name="preselect" /></PlainButton>
        <ModelButton aria-label="Model display"><Icon name="model" size={18} /></ModelButton>
        <SelectWrap>
          <FilterSelect aria-label="Selection filter"><option>Geometry</option></FilterSelect>
          <SelectArrow><Caret /></SelectArrow>
        </SelectWrap>
      </StatusTools>
    </Status>
  );
}

export default function App() {
  const [active, setActive] = useState('Model');

  return (
    <Window>
      <GlobalStyle />
      <TitleBar />
      <TabBar active={active} onChange={setActive} />
      <Ribbon>
        {ribbon.map(group => (
          <Group key={group.label} $width={group.width}>
            <GroupItems $pad={group.pad}>
              {group.items.map((item, i) => <RibbonItem key={i} item={item} />)}
            </GroupItems>
            <GroupLabel>{group.label}<Caret $gap={3} /></GroupLabel>
          </Group>
        ))}
      </Ribbon>
      <Workspace>
        <ModelTree />
        <Canvas>
          <Drone />
          <ViewTools>
            {viewTools.map(n => <PlainButton key={n} aria-label={n} $width={26}><Icon name={n} /></PlainButton>)}
          </ViewTools>
        </Canvas>
      </Workspace>
      <StatusBar />
      <Pointer width="26" height="40" viewBox="0 0 26 40" aria-hidden="true">
        <path d="M2 3V33L9 27L15 38L20 35L15 25H24Z" fill="#f2f0f2" stroke="#111" strokeWidth="2" strokeLinejoin="round" />
      </Pointer>
    </Window>
  );
}

/* ---------- styles ---------- */

const GlobalStyle = createGlobalStyle`
  * {
    box-sizing: border-box;
  }

  body {
    margin: 0;
    font: 11px/15px 'Noto Sans', 'Open Sans', sans-serif;
    color: ${INK};
    background: #e8e9ed;
  }

  button, input, select {
    font: inherit;
    color: inherit;
    border: 0;
    padding: 0;
    margin: 0;
    background: none;
  }
`;

const Window = styled.div`
  position: relative;
  display: flex;
  flex-direction: column;
  min-height: 100vh;
`;

const Caret = styled.span`
  flex: none;
  display: inline-block;
  vertical-align: middle;
  width: 0;
  margin-left: ${props => props.$gap || 0}px;
  border: 4px solid transparent;
  border-top-color: ${props => props.$light ? '#fff' : props.$off ? GREY : '#5c6163'};
  border-bottom: 0;
`;

const PlainButton = styled.button`
  display: flex;
  flex: none;
  align-items: center;
  justify-content: center;
  width: ${props => props.$width}px;
  height: 24px;
`;

const BarLine = styled.span`
  flex: none;
  width: 1px;
  height: ${props => props.$height}px;
  margin: 0 ${props => props.$space || 0}px;
  background: ${GREY};
`;

const Title = styled.header`
  display: grid;
  grid-template-columns: 1fr auto 1fr;
  height: 28px;
  background: #dae0df;
`;

const QuickAccess = styled.div`
  display: flex;
  align-items: center;
  padding-left: 8px;
`;

const Brand = styled.span`
  display: flex;
  width: 59px;
  padding-left: 4px;
  font: 19px/20px Lato, sans-serif;
  color: #5b6163;
`;

const BrandDot = styled.span`
  width: 2px;
  height: 2px;
  margin: 6px 0 0 1px;
  background: currentColor;
`;

const TitleText = styled.h1`
  margin: 0;
  font: 400 13px/28px 'Open Sans', 'Noto Sans', sans-serif;
`;

const WindowButtons = styled.div`
  display: flex;
  justify-content: flex-end;
  align-items: center;
  padding-right: 4px;
`;

const Tabs = styled.nav`
  display: flex;
  height: 27px;
  background: ${INK};
  font-size: 12px;
`;

const Tab = styled.button`
  padding: 1px 24px 0;
  color: ${props => props.$active ? '#3b7d23' : '#fff'};
  background: ${props => props.$active ? '#f8f9fc' : 'none'};
`;

const FileTab = styled.button`
  width: 59px;
  padding-top: 1px;
  color: #fff;
  background: linear-gradient(#66c63c, #4da332);
`;

const TabTools = styled.div`
  display: flex;
  flex: 1;
  justify-content: flex-end;
  align-items: center;
`;

const SearchBox = styled.div`
  display: flex;
  align-items: center;
  width: 232px;
  height: 23px;
  padding-right: 2px;
  background: #fff;
  border: 1px solid #a9b7b8;
`;

const SearchInput = styled.input`
  flex: 1;
  min-width: 0;
  outline: 0;
`;

const FindButton = styled.button`
  display: grid;
  place-items: center;
  width: 24px;
  height: 25px;
  margin-left: 2px;
  background: #dcdfe0;
  border: 1px solid #b9bdbe;
`;

const CollapseButton = styled.button`
  display: grid;
  justify-items: center;
  align-self: stretch;
  width: 26px;
  padding-top: 7px;
`;

const UpMark = styled.span`
  align-self: start;
  border: 5px solid transparent;
  border-top: 0;
  border-bottom: 6px solid #fff;
`;

const HelpButton = styled.button`
  width: 24px;
  color: #fff;
  font-size: 13px;
  font-weight: 700;
`;

const Ribbon = styled.section`
  display: flex;
  height: 107px;
  background: #f8f9fc;
  border-bottom: 1px solid #a9b7b8;
`;

const Group = styled.div`
  display: flex;
  flex: none;
  flex-direction: column;
  width: ${props => props.$width}px;
  background: linear-gradient(${GREY}, ${GREY}) right center / 1px 102px no-repeat;
`;

const GroupItems = styled.div`
  display: flex;
  height: 84px;
  padding-left: ${props => props.$pad || 0}px;
`;

const GroupLabel = styled.button`
  height: 20px;
  white-space: nowrap;
`;

const Divider = styled.span`
  flex: none;
  width: 1px;
  margin: 2px 0 3px;
  background: ${GREY};
`;

const BigButton = styled.button`
  display: flex;
  flex: none;
  flex-direction: column;
  align-items: center;
  gap: 9px;
  width: ${props => props.$width}px;
  padding-top: 6px;
`;

const BigLabel = styled.span`
  display: flex;
  flex-direction: column;
  align-items: center;
  white-space: nowrap;
`;

const CaretLine = styled.span`
  display: flex;
  align-items: center;
  height: 14px;
`;

const Rows = styled.div`
  display: flex;
  flex: none;
  flex-direction: column;
  width: ${props => props.$width ? `${props.$width}px` : 'auto'};
`;

const SmallButton = styled.button`
  display: flex;
  align-items: center;
  gap: 4px;
  height: 27px;
  white-space: nowrap;

  &:disabled {
    color: #a4a8aa;
  }
`;

const Workspace = styled.main`
  display: flex;
  flex: 1;
`;

const Side = styled.aside`
  display: flex;
  flex: none;
  flex-direction: column;
  width: 283px;
  background: #f8faf9;
  border-right: 3px solid #dae0df;
`;

const SideTabs = styled.div`
  display: flex;
  height: 26px;
  background: #dae0df;
`;

const SideTab = styled.button`
  display: grid;
  place-items: center;
  width: 32px;
  background: ${props => props.$active ? '#f8faf9' : 'none'};
`;

const TreeTools = styled.div`
  display: flex;
  align-items: center;
  height: 34px;
  padding-left: 4px;
`;

const Grip = styled.span`
  width: 2px;
  height: 16px;
  margin-right: 15px;
  border-left: 2px dotted #9a9fa1;
`;

const More = styled.span`
  width: 10px;
  margin-left: auto;
  font-size: 16px;
`;

const FilterRow = styled.div`
  display: flex;
  align-items: center;
  height: 27px;
  padding-left: 12px;
  padding-right: 6px;
`;

const FilterBox = styled.div`
  display: flex;
  flex: 1;
  height: 27px;
  margin-left: 4px;
  background: #fff;
  border: 1px solid #9fb0b3;
`;

const FilterInput = styled.input`
  flex: 1;
  min-width: 0;
  outline: 0;
`;

const ClearButton = styled.button`
  width: 20px;
  color: #85898b;
`;

const TreeHead = styled.div`
  height: 21px;
  margin: 4px 5px 0 8px;
  background: #fafbfb;
  border-right: 1px solid #c8cccd;
  border-bottom: 1px solid #c8cccd;
`;

const TreeRoot = styled.div`
  display: flex;
  align-items: center;
  gap: 4px;
  height: 18px;
  padding-left: 12px;
  font-family: 'Open Sans', 'Noto Sans', sans-serif;
`;

const TreeList = styled.ul`
  margin: 0;
  padding: 0;
  list-style: none;
  font-family: 'Open Sans', 'Noto Sans', sans-serif;
`;

const TreeItem = styled.li`
  display: flex;
  align-items: center;
  height: 18px;
  padding-left: 16px;
`;

const Branch = styled.span`
  position: relative;
  display: flex;
  align-items: center;
  align-self: stretch;
  width: 15px;

  &::before {
    content: '';
    position: absolute;
    left: 3px;
    top: 0;
    width: 1px;
    height: ${props => props.$leaf ? 18 : 5}px;
    background: #c2c6c7;
  }

  &::after {
    content: '';
    position: absolute;
    left: 3px;
    width: ${props => props.$leaf ? 9 : 0}px;
    height: 1px;
    background: #c2c6c7;
  }
`;

const Twisty = styled.span`
  margin-left: 1px;
  border: 4px solid transparent;
  border-left: 4px solid #5c6163;
  border-right: 0;
`;

const TreeName = styled.span`
  display: flex;
  align-items: center;
  gap: 1px;
  margin-left: 5px;
`;

const InsertLine = styled.div`
  height: 7px;
  margin: 5px 5px 0 11px;
  border: 1px solid #62c544;
  border-width: 0 2px;
  background: linear-gradient(#62c544, #62c544) center / 100% 2px no-repeat;
`;

const Canvas = styled.section`
  display: grid;
  flex: 1;
  min-width: 0;
  background: #e8e9ed;

  > * {
    grid-area: 1 / 1;
  }
`;

const Scene = styled.svg`
  display: block;
  width: 100%;
  height: 100%;
`;

const ViewTools = styled.div`
  display: flex;
  align-items: center;
  align-self: start;
  justify-self: center;
  height: 32px;
  margin: 7px 2px 0 0;
  padding: 0 2px;
  background: #f8f9fc;
  border: 1px solid #999fa0;
`;

const Status = styled.footer`
  display: flex;
  align-items: center;
  height: 38px;
  padding-left: 6px;
  background: #f8faf9;
  border-top: 1px solid #a9b7b8;
`;

const StatusToggle = styled.button`
  display: grid;
  place-items: center;
  width: 22px;
  height: 24px;
  margin-right: 2px;
  background: #dfe2e3;
  border: 1px solid #9a9fa1;
`;

const StatusLine = styled.span`
  width: 1px;
  height: 24px;
  margin-left: 7px;
  background: ${GREY};
`;

const StatusText = styled.p`
  display: flex;
  align-items: center;
  align-self: flex-start;
  gap: 5px;
  margin: 8px 0 0 6px;
  font-family: 'Open Sans', 'Noto Sans', sans-serif;
  font-weight: 500;
`;

const Dot = styled.span`
  width: 5px;
  height: 5px;
  border-radius: 50%;
  background: ${BLUE};
`;

const StatusTools = styled.div`
  display: flex;
  align-items: center;
  margin-left: auto;
  padding-right: 18px;
`;

const Spacer = styled.span`
  width: 4px;
`;

const ModelButton = styled.button`
  display: grid;
  place-items: center;
  width: 40px;
  height: 28px;
  border: 1px solid #a6abad;
`;

const SelectWrap = styled.div`
  display: flex;
  align-items: center;
  width: 165px;
  height: 23px;
  margin-left: 90px;
  border: 1px solid #a6abad;
`;

const FilterSelect = styled.select`
  flex: 1;
  align-self: stretch;
  padding-left: 7px;
  appearance: none;
`;

const SelectArrow = styled.span`
  display: grid;
  align-self: stretch;
  place-items: center;
  width: 15px;
  border-left: 1px solid #a6abad;
  pointer-events: none;
`;

const Pointer = styled.svg`
  position: absolute;
  top: 125px;
  right: 14px;
  pointer-events: none;
`;
